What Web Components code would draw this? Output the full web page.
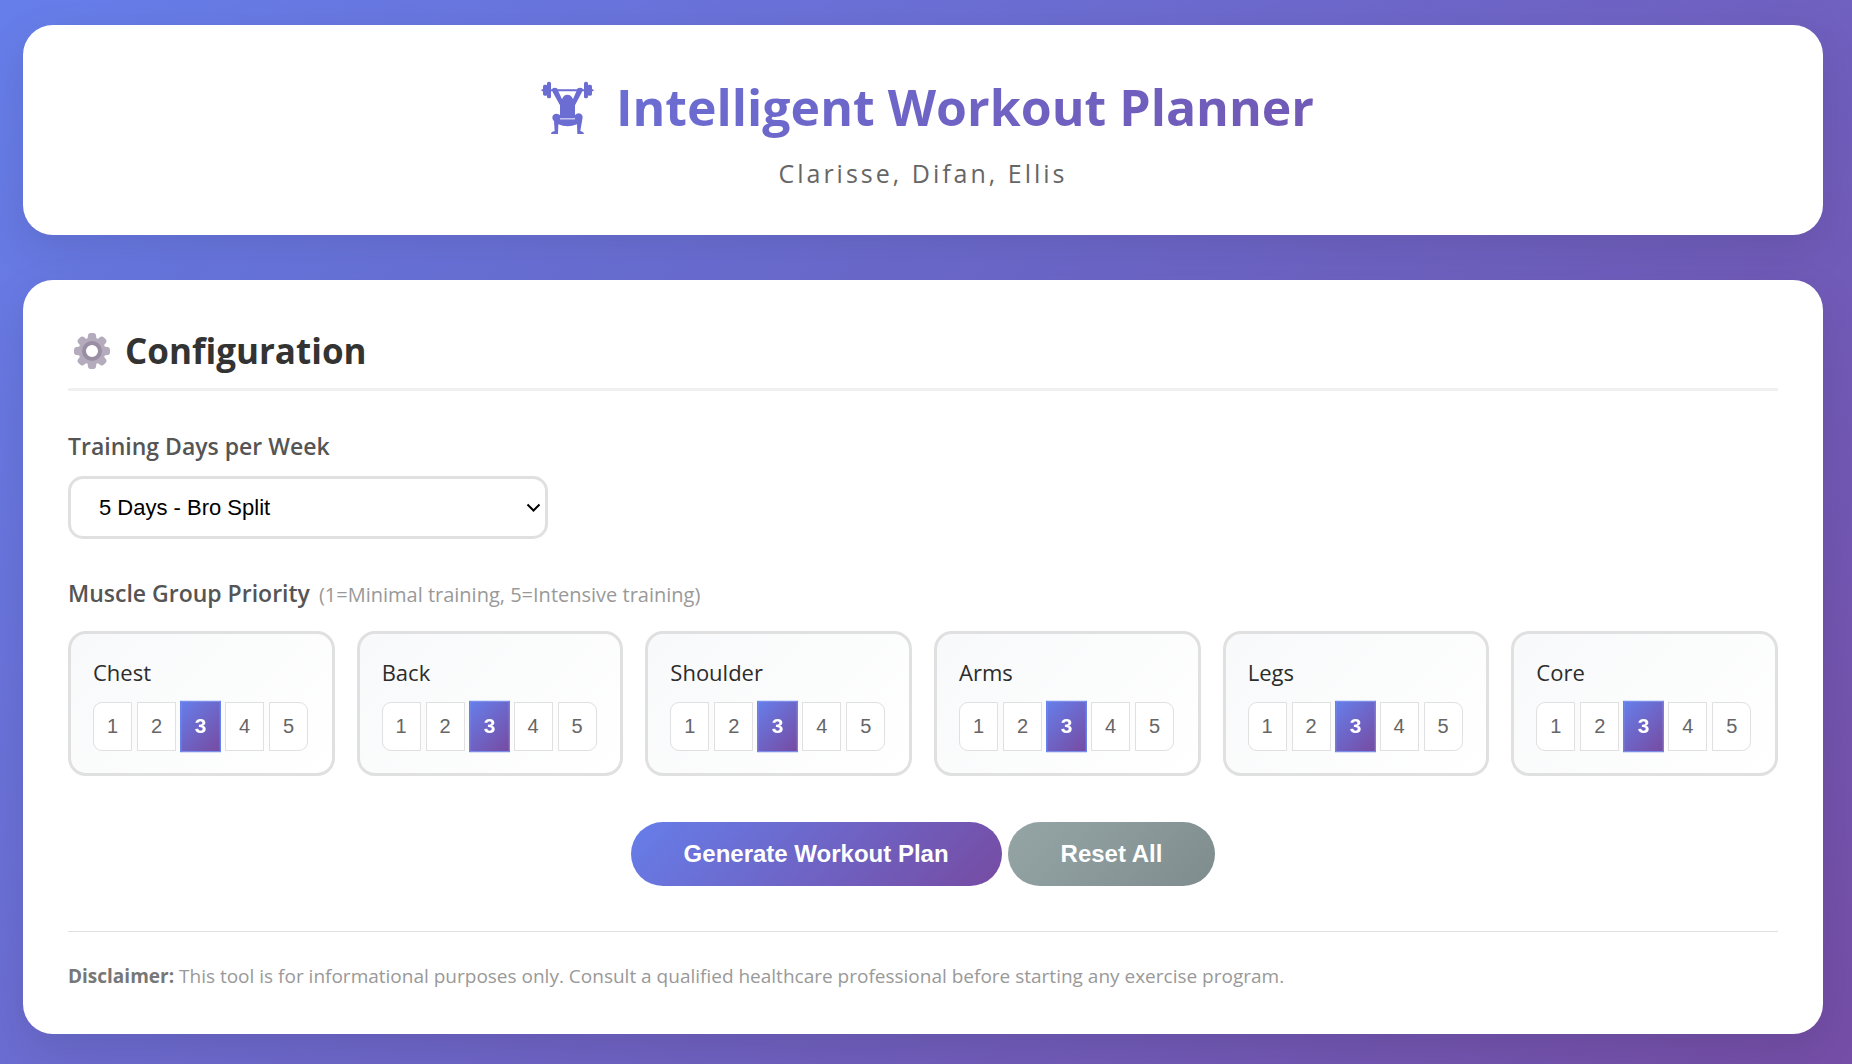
<!DOCTYPE html>
<html lang="en">
<head>
<meta charset="utf-8">
<title>Intelligent Workout Planner</title>
<style>
  html { min-height: 100%; background: linear-gradient(135deg, #667eea 0%, #764ba2 106%); }
  body {
    margin: 0;
    padding: 25px 29px 30px 23px;
    font-family: "Open Sans", "Noto Sans", sans-serif;
    color: #333;
  }
</style>
</head>
<body>
<workout-app></workout-app>

<script>
const define = (name, markup, setup) => {
  const template = document.createElement('template');
  template.innerHTML = markup;
  customElements.define(name, class extends HTMLElement {
    constructor() {
      super();
      this.attachShadow({ mode: 'open' }).append(template.content.cloneNode(true));
    }
    connectedCallback() { if (setup) setup(this, this.shadowRoot); }
  });
};

define('panel-card', `
<style>
  :host { display: block; background: #fff; border-radius: 30px; padding: 45px; box-shadow: 0 15px 45px rgba(0,0,0,.1); }
</style>
<slot></slot>`);

define('lifter-icon', `
<style>:host { display: block; } svg { display: block; }</style>
<svg width="70" height="74" viewBox="-6 2 210 222" aria-hidden="true">
  <g fill="#6b6dd3">
    <rect x="22" y="60" width="157" height="6" rx="3"/>
    <rect x="27" y="46" width="14" height="33" rx="5"/>
    <rect x="39" y="37" width="12" height="50" rx="5"/>
    <rect x="150" y="37" width="12" height="50" rx="5"/>
    <rect x="160" y="46" width="14" height="33" rx="5"/>
    <path d="M54 59 Q60 52 69 57 L84 90 Q88 76 100 76 Q113 76 117 90 L131 57 Q140 52 147 59 L144 68 L123 108 L123 147 L78 147 L78 108 L56 68Z"/>
    <path d="M78 150 H123 V137 Q130 130 140 133 Q148 138 145 150 L139 185 Q149 187 150 194 H130 L129 165 Q100 177 73 165 L72 194 H51 Q51 187 62 185 L60 155 Q53 149 56 139 Q63 129 78 137Z"/>
  </g>
  <path d="M78 148.500 H121" stroke="#b4b5e9" stroke-width="3"/>
</svg>`);

define('gear-icon', `
<style>:host { display: block; } svg { display: block; }</style>
<svg width="48" height="48" viewBox="-24 -24 48 48" aria-hidden="true">
  <g id="teeth" fill="#b4acbc"></g>
  <circle r="10" fill="none" stroke="#b4acbc" stroke-width="7"/>
  <circle r="8" fill="none" stroke="#998ea4" stroke-width="4"/>
</svg>`, (host, root) => {
  const teeth = root.getElementById('teeth');
  if (teeth.childElementCount) return;
  for (let angle = 0; angle < 360; angle += 45) {
    const tooth = document.createElementNS('http://www.w3.org/2000/svg', 'path');
    tooth.setAttribute('d', 'M-4.500 -11 L-4 -16 Q-3.500 -18 -1.500 -18 H1.500 Q3.500 -18 4 -16 L4.500 -11Z');
    tooth.setAttribute('transform', `rotate(${angle})`);
    teeth.append(tooth);
  }
});

define('page-banner', `
<style>
  :host { display: block; text-align: center; }
  h1 {
    display: flex; justify-content: center; align-items: center; gap: 14px;
    margin: 0 0 12px; font-size: 50px; line-height: 74px; font-weight: 700;
    background: linear-gradient(135deg, #667eea, #764ba2);
    -webkit-background-clip: text; background-clip: text;
    -webkit-text-fill-color: transparent;
  }
  p { margin: 0; font-size: 25px; line-height: 34px; letter-spacing: 3px; color: #666; }
</style>
<h1><lifter-icon></lifter-icon><slot></slot></h1>
<p><slot name="authors"></slot></p>`);

define('section-title', `
<style>
  :host { display: block; }
  h2 {
    display: flex; align-items: center; gap: 9px; margin: 0 0 39px; padding-bottom: 11px;
    border-bottom: 3px solid #f0f0f0; font-size: 35px; line-height: 52px; font-weight: 700; color: #333;
  }
</style>
<h2><gear-icon></gear-icon><slot></slot></h2>`);

define('days-select', `
<style>
  :host { display: block; margin-bottom: 38px; }
  label { display: block; margin-bottom: 14px; font-size: 23px; line-height: 32px; font-weight: 600; color: #555; }
  .box { display: grid; width: 480px; max-width: 100%; align-items: center; }
  .box > * { grid-area: 1 / 1; }
  select {
    appearance: none; box-sizing: border-box; width: 100%; height: 63px; padding: 0 28px;
    border: 3px solid #e0e0e0; border-radius: 15px; background: #fff; color: #000;
    font: 22px "Liberation Sans", Arial, sans-serif;
  }
  svg { justify-self: end; margin-right: 7px; pointer-events: none; }
</style>
<label for="days">Training Days per Week</label>
<div class="box">
  <select id="days">
    <option>3 Days - Full Body</option>
    <option>4 Days - Upper/Lower</option>
    <option selected>5 Days - Bro Split</option>
  </select>
  <svg width="15" height="10" viewBox="0 0 15 10" aria-hidden="true"><path d="M1.500 1.500 L7.500 7.500 L13.500 1.500" fill="none" stroke="#000" stroke-width="2"/></svg>
</div>`);

define('muscle-card', `
<style>
  :host {
    display: block; box-sizing: border-box; min-width: 0; padding: 22px;
    border: 3px solid #e0e0e0; border-radius: 18px;
    background: linear-gradient(135deg, #f8f9fa, #fff);
  }
  h3 { margin: 0 0 14px; font-size: 22px; line-height: 32px; font-weight: 500; color: #2c2c2c; }
  .scale { display: flex; gap: 5px; }
  button {
    box-sizing: border-box; width: 39px; height: 49px; padding: 0;
    border: 1px solid #e0e0e0; background: #fff; color: #666;
    font: 20px "Liberation Sans", Arial, sans-serif; cursor: pointer;
  }
  button:first-child { border-radius: 9px 0 0 9px; }
  button:last-child { border-radius: 0 9px 9px 0; }
  button[aria-pressed="true"] {
    transform: scale(1.05); border-color: #667eea; color: #fff; font-weight: 700;
    background: linear-gradient(135deg, #667eea, #764ba2);
  }
</style>
<h3 id="name"><slot></slot></h3>
<div class="scale" role="group" aria-labelledby="name">
  <button type="button" aria-pressed="false">1</button>
  <button type="button" aria-pressed="false">2</button>
  <button type="button" aria-pressed="true">3</button>
  <button type="button" aria-pressed="false">4</button>
  <button type="button" aria-pressed="false">5</button>
</div>`, (host, root) => {
  const buttons = root.querySelectorAll('button');
  root.querySelector('.scale').onclick = ({ target }) => {
    if (target.matches('button')) buttons.forEach(b => b.setAttribute('aria-pressed', b === target));
  };
});

define('muscle-priorities', `
<style>
  :host { display: block; margin-bottom: 46px; }
  header { display: flex; align-items: baseline; gap: 9px; margin-bottom: 20px; line-height: 32px; }
  .title { font-size: 23px; font-weight: 600; color: #555; }
  .hint { font-size: 20px; color: #999; }
  .grid { display: grid; grid-template-columns: repeat(auto-fit, minmax(251px, 1fr)); gap: 22px; }
</style>
<header><span class="title">Muscle Group Priority</span><span class="hint">(1=Minimal training, 5=Intensive training)</span></header>
<div class="grid">
  <muscle-card>Chest</muscle-card>
  <muscle-card>Back</muscle-card>
  <muscle-card>Shoulder</muscle-card>
  <muscle-card>Arms</muscle-card>
  <muscle-card>Legs</muscle-card>
  <muscle-card>Core</muscle-card>
</div>`);

define('plan-actions', `
<style>
  :host { display: flex; flex-wrap: wrap; justify-content: center; gap: 6px; margin-bottom: 45px; }
  button {
    height: 64px; padding: 0 53px; border: 0; border-radius: 32px; color: #fff; cursor: pointer;
    font: 700 24px "Liberation Sans", Arial, sans-serif;
    background: linear-gradient(135deg, #667eea, #764ba2);
  }
  .reset { background: linear-gradient(135deg, #95a5a6, #7f8c8d); }
</style>
<button type="button">Generate Workout Plan</button>
<button type="button" class="reset">Reset All</button>`);

define('disclaimer-note', `
<style>
  :host { display: block; border-top: 1px solid #e0e0e0; padding-top: 31px; font-size: 19px; line-height: 26px; color: #999; }
  p { margin: 0; }
  strong { font-weight: 700; color: #777; }
</style>
<p><strong>Disclaimer:</strong> <slot></slot></p>`);

define('workout-app', `
<style>
  :host { display: flex; flex-direction: column; gap: 45px; max-width: 1800px; margin: 0 auto; }
</style>
<panel-card>
  <page-banner>Intelligent Workout Planner<span slot="authors">Clarisse, Difan, Ellis</span></page-banner>
</panel-card>
<panel-card>
  <section-title>Configuration</section-title>
  <days-select></days-select>
  <muscle-priorities></muscle-priorities>
  <plan-actions></plan-actions>
  <disclaimer-note>This tool is for informational purposes only. Consult a qualified healthcare professional before starting any exercise program.</disclaimer-note>
</panel-card>`);
</script>
</body>
</html>
